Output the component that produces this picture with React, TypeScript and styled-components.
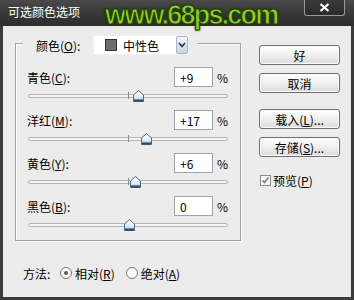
import React from 'react'
import styled, { createGlobalStyle } from 'styled-components'

const GlobalStyle = createGlobalStyle`
  html, body {
    margin: 0;
    padding: 0;
    background: #ececec;
  }
  body {
    font-family: "Noto Sans CJK SC", "DejaVu Sans", sans-serif;
    font-size: 12px;
    color: #000;
  }
`

const Window = styled.div`
  width: 354px;
  height: 300px;
  display: flex;
  flex-direction: column;
  overflow: hidden;
`

const TitleBar = styled.div`
  position: relative;
  z-index: 1;
  height: 26px;
  flex: none;
  background: linear-gradient(180deg, #4a4a4a 0%, #383838 50%, #2e2e2e 100%);
  display: flex;
  align-items: flex-start;
  padding: 5px 0 0 8px;
  box-sizing: border-box;
`

const Title = styled.span`
  color: #fff;
  font-size: 12px;
  line-height: 14px;
`

const Watermark = styled.span`
  position: absolute;
  left: 105px;
  top: 0;
  font-family: "Liberation Sans", Arial, sans-serif;
  font-weight: bold;
  font-size: 27px;
  letter-spacing: -1.8px;
  white-space: nowrap;
  color: #8fd12a;
  -webkit-text-stroke: 1px #1e3d00;
  text-shadow: 0 0 2px #2a4a00, 0 0 3px #1a2a00;
`

const CloseButton = styled.div`
  position: absolute;
  left: 304px;
  top: 0;
  width: 41px;
  height: 16px;
  box-sizing: border-box;
  border: 1px solid #9a9a9a;
  border-top: none;
  border-radius: 0 0 3px 3px;
  background: linear-gradient(180deg, #3a3a3a, #2a2a2a);
  display: flex;
  align-items: center;
  justify-content: center;
`

const Body = styled.div`
  flex: 1;
  display: flex;
  border: 3px solid #3c3c3c;
  border-top: none;
  background: #ececec;
  padding-left: 12px;
`

const LeftColumn = styled.div`
  width: 226px;
  display: flex;
  flex-direction: column;
`

const GroupBox = styled.div`
  margin-top: 17px;
  height: 198px;
  box-sizing: border-box;
  border: 1px solid #a2a2a2;
  box-shadow: inset 1px 1px 0 #fff, 1px 1px 0 #fff;
  padding: 0 11px;
  display: flex;
  flex-direction: column;
`

const Legend = styled.div`
  margin: -9px 0 0 -4px;
  width: 174px;
  height: 20px;
  background: #ececec;
  display: flex;
  align-items: center;
  padding-left: 13px;
  box-sizing: border-box;
`

const LegendLabel = styled.span`
  width: 57px;
`

const Select = styled.div`
  width: 96px;
  height: 20px;
  display: flex;
  align-items: center;
  background: #fff;
  box-sizing: border-box;
  border: 1px solid #f2f2f2;
`

const Swatch = styled.span`
  width: 12px;
  height: 12px;
  margin: 0 6px 0 11px;
  background: #6e6e6e;
  border: 1px solid #333;
  box-sizing: border-box;
`

const SelectText = styled.span`
  flex: 1;
`

const SelectArrow = styled.span`
  width: 12px;
  height: 18px;
  box-sizing: border-box;
  border: 1px solid #a8b4c2;
  border-radius: 2px;
  background: linear-gradient(180deg, #f3f6fa, #c8d3e0);
  display: flex;
  align-items: center;
  justify-content: center;
`

const Section = styled.div<{ $first?: boolean }>`
  margin-top: ${p => (p.$first ? 12 : 7)}px;
  display: flex;
  flex-direction: column;
`

const LabelRow = styled.div`
  height: 20px;
  display: flex;
  align-items: center;
`

const Label = styled.span`
  flex: 1;
`

const NumberBox = styled.div`
  width: 39px;
  height: 20px;
  box-sizing: border-box;
  border: 1px solid #9ea4ab;
  background: #fff;
  padding-left: 5px;
  display: flex;
  align-items: center;
`

const Percent = styled.span`
  width: 12px;
  margin-left: 4px;
`

const Slider = styled.div`
  position: relative;
  height: 14px;
  margin: 2px 1px 0;
`

const Track = styled.div`
  position: absolute;
  left: 0;
  right: 0;
  top: 5px;
  height: 4px;
  box-sizing: border-box;
  border: 1px solid #b4b4b4;
  border-radius: 2px;
  background: #f4f4f4;
`

const Tick = styled.div`
  position: absolute;
  left: 100px;
  top: 3px;
  width: 1px;
  height: 7px;
  background: #8c8c8c;
`

const Thumb = styled.svg`
  position: absolute;
  top: 1px;
`

const MethodRow = styled.div`
  margin-top: 24px;
  padding-left: 8px;
  display: flex;
  align-items: center;
  height: 16px;
`

const MethodLabel = styled.span`
  width: 37px;
`

const RadioItem = styled.label`
  display: flex;
  align-items: center;
  margin-right: 11px;
`

const RadioCircle = styled.span<{ $on?: boolean }>`
  width: 12px;
  height: 12px;
  box-sizing: border-box;
  border-radius: 50%;
  border: 1px solid #777;
  background: #fafafa;
  margin-right: 3px;
  display: flex;
  align-items: center;
  justify-content: center;
  &::after {
    content: '';
    width: 4px;
    height: 4px;
    border-radius: 50%;
    background: ${p => (p.$on ? '#5a5a5a' : 'transparent')};
  }
`

const RightColumn = styled.div`
  margin-left: 18px;
  width: 81px;
  padding-top: 19px;
  display: flex;
  flex-direction: column;
`

const Button = styled.div<{ $gap?: number }>`
  margin-top: ${p => p.$gap ?? 0}px;
  height: 20px;
  box-sizing: border-box;
  border: 1px solid #6f6f6f;
  border-radius: 3px;
  background: linear-gradient(180deg, #ffffff 0%, #f1f1f1 45%, #dcdcdc 100%);
  box-shadow: inset 0 0 0 1px #fbfbfb;
  display: flex;
  align-items: center;
  justify-content: center;
`

const CheckRow = styled.label`
  margin-top: 17px;
  display: flex;
  align-items: center;
  height: 12px;
`

const CheckBox = styled.span`
  width: 11px;
  height: 11px;
  box-sizing: border-box;
  border: 1px solid #8a8a8a;
  background: #f6f6f6;
  margin: 0 2px 0 1px;
  display: flex;
  align-items: center;
  justify-content: center;
`

const U = styled.span`
  text-decoration: underline;
`

type Channel = { name: string; key: string; value: number }

const channels: Channel[] = [
  { name: '青色', key: 'C', value: 9 },
  { name: '洋红', key: 'M', value: 17 },
  { name: '黄色', key: 'Y', value: 6 },
  { name: '黑色', key: 'B', value: 0 },
]

const fmt = (v: number) => (v > 0 ? '+' + v : String(v))

const ThumbShape = ({ value }: { value: number }) => (
  <Thumb width="11" height="13" viewBox="0 0 11 13" style={{ left: 96 + value }}>
    <defs>
      <linearGradient id="tg" x1="0" y1="0" x2="0" y2="1">
        <stop offset="0" stopColor="#ffffff" />
        <stop offset="0.6" stopColor="#e4ecf6" />
        <stop offset="1" stopColor="#9fb6d2" />
      </linearGradient>
    </defs>
    <path d="M0.5 5 L5.5 0.5 L10.5 5 V11.5 H0.5 Z" fill="url(#tg)" stroke="#4f6680" strokeWidth="1" />
    <rect x="1" y="9.5" width="9" height="2" fill="#2f4a6e" />
  </Thumb>
)

const SliderSection = ({ ch, first }: { ch: Channel; first?: boolean }) => (
  <Section $first={first}>
    <LabelRow>
      <Label>
        {ch.name}(<U>{ch.key}</U>):
      </Label>
      <NumberBox>{fmt(ch.value)}</NumberBox>
      <Percent>%</Percent>
    </LabelRow>
    <Slider>
      <Track />
      <Tick />
      <ThumbShape value={ch.value} />
    </Slider>
  </Section>
)

export default function App() {
  return (
    <Window>
      <GlobalStyle />
      <TitleBar>
        <Title>可选颜色选项</Title>
        <Watermark>www.68ps.com</Watermark>
        <CloseButton>
          <svg width="11" height="9" viewBox="0 0 11 9">
            <path d="M1.5 1 L9.5 8 M9.5 1 L1.5 8" stroke="#fff" strokeWidth="2.2" />
          </svg>
        </CloseButton>
      </TitleBar>
      <Body>
        <LeftColumn>
          <GroupBox>
            <Legend>
              <LegendLabel>
                颜色(<U>O</U>):
              </LegendLabel>
              <Select>
                <Swatch />
                <SelectText>中性色</SelectText>
                <SelectArrow>
                  <svg width="8" height="6" viewBox="0 0 8 6">
                    <path d="M1 1 L4 4.5 L7 1" fill="none" stroke="#1f3350" strokeWidth="1.6" />
                  </svg>
                </SelectArrow>
              </Select>
            </Legend>
            {channels.map((ch, i) => (
              <SliderSection key={ch.key} ch={ch} first={i === 0} />
            ))}
          </GroupBox>
          <MethodRow>
            <MethodLabel>方法:</MethodLabel>
            <RadioItem>
              <RadioCircle $on />
              相对(<U>R</U>)
            </RadioItem>
            <RadioItem>
              <RadioCircle />
              绝对(<U>A</U>)
            </RadioItem>
          </MethodRow>
        </LeftColumn>
        <RightColumn>
          <Button>好</Button>
          <Button $gap={8}>取消</Button>
          <Button $gap={16}>
            载入(<U>L</U>)...
          </Button>
          <Button $gap={8}>
            存储(<U>S</U>)...
          </Button>
          <CheckRow>
            <CheckBox>
              <svg width="9" height="9" viewBox="0 0 9 9">
                <path d="M1.5 4.5 L3.5 6.5 L7.5 1.5" fill="none" stroke="#7a7a7a" strokeWidth="1.6" />
              </svg>
            </CheckBox>
            预览(<U>P</U>)
          </CheckRow>
        </RightColumn>
      </Body>
    </Window>
  )
}
